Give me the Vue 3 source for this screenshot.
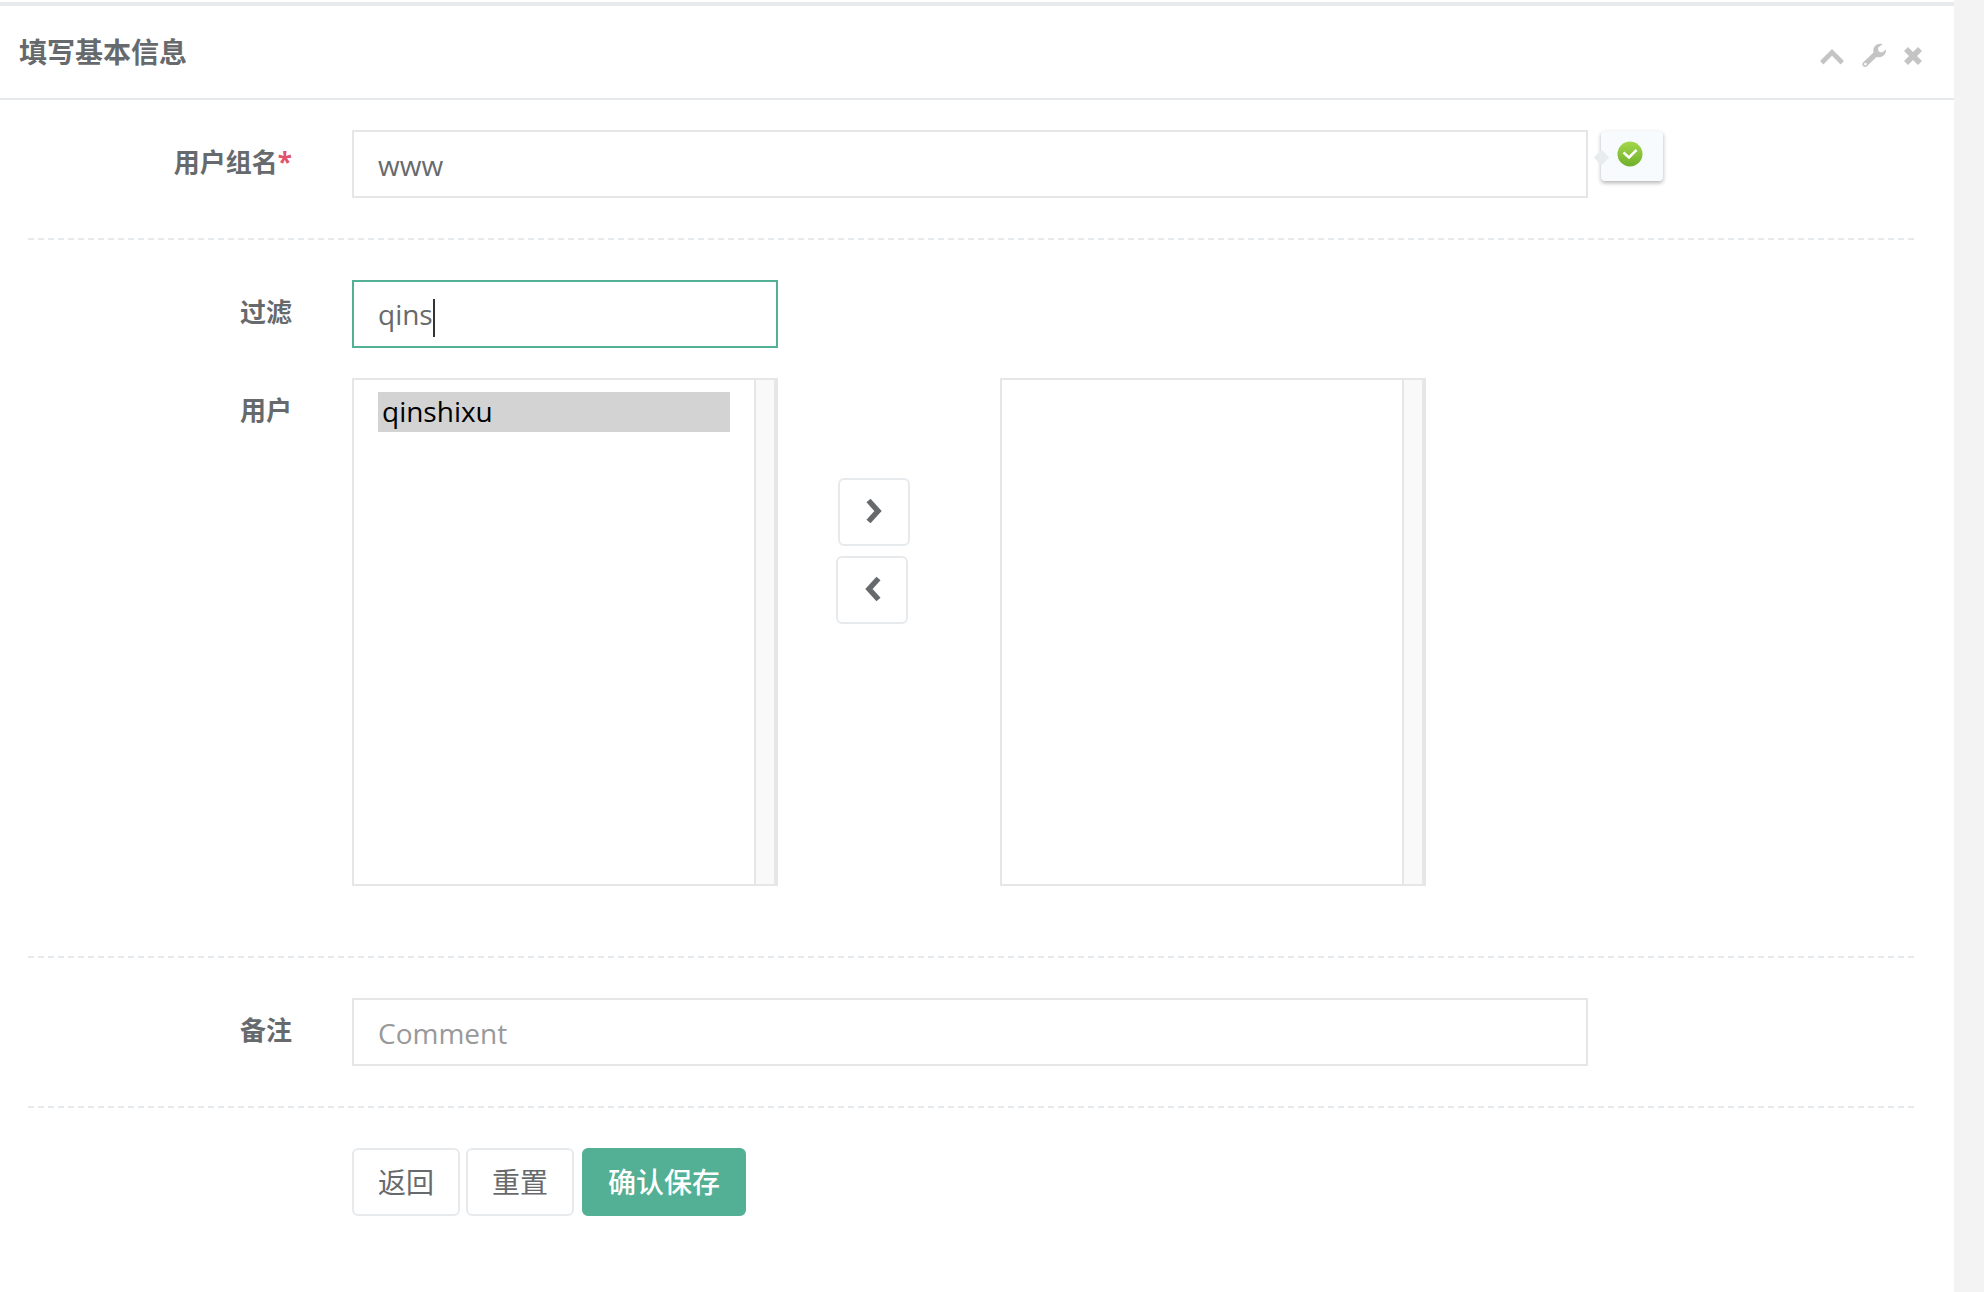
<script setup>
const availableUsers = ['qinshixu']
</script>

<template>
  <div class="page">
    <div class="panel">
      <div class="panel-title">
        <h5>填写基本信息</h5>
        <div class="tools">
          <svg class="tool-up" width="24" height="16" viewBox="0 0 24 16">
            <path d="M0 12 12 0l12 12-3.400 3.400L12 6.800 3.400 15.400z" fill="#c4c4c4" />
          </svg>
          <svg class="tool-wrench" width="24" height="24" viewBox="0 0 24 24">
            <path fill-rule="evenodd" d="M1 19.500 11.500 9.500C10.500 5 13.500 .5 19 .8l1.500.4-4.500 3.600.6 3.600 3.400 1.200L24 6.500c.4 5-3.800 8.800-9.500 7.500L5 23.300c-1.200 1-2.800.9-3.800-.1-1-1-1.100-2.600-.2-3.700zM3.400 19.800a1.300 1.300 0 1 0 .01 0z" fill="#c4c4c4" />
          </svg>
          <svg class="tool-close" width="20" height="20" viewBox="0 0 20 20">
            <path d="M1 5 5 1l5 5 5-5 4 4-5 5 5 5-4 4-5-5-5 5-4-4 5-5z" fill="#c4c4c4" />
          </svg>
        </div>
      </div>

      <form class="form" @submit.prevent>
        <div class="row">
          <label class="label">用户组名<span class="required">*</span></label>
          <div class="field">
            <input class="input" type="text" value="www" />
            <div class="valid-tip">
              <svg width="26" height="26" viewBox="0 0 26 26">
                <defs>
                  <linearGradient id="tip-green" x1="0" y1="0" x2="0" y2="1">
                    <stop offset="0" stop-color="#a4d64a" />
                    <stop offset="1" stop-color="#6fb02c" />
                  </linearGradient>
                </defs>
                <circle cx="13" cy="13" r="12.500" fill="url(#tip-green)" />
                <path d="M6.500 11.500 12 16.500 19.500 9" fill="none" stroke="#fff" stroke-width="2.500" />
              </svg>
            </div>
          </div>
        </div>

        <div class="dashed"></div>

        <div class="row">
          <label class="label">过滤</label>
          <div class="filter-input">qins<span class="caret"></span></div>
        </div>

        <div class="row row-users">
          <label class="label">用户</label>
          <div class="transfer">
            <div class="list">
              <div class="list-items">
                <div v-for="user in availableUsers" :key="user" class="list-item">{{ user }}</div>
              </div>
              <div class="list-scroll"></div>
            </div>
            <div class="arrows">
              <button class="arrow-btn" type="button">
                <svg width="18" height="26" viewBox="0 0 18 26">
                  <path d="M3.500 2.500 13 13 3.500 23.500" fill="none" stroke="#676a6c" stroke-width="5.500" />
                </svg>
              </button>
              <button class="arrow-btn arrow-back" type="button">
                <svg width="18" height="26" viewBox="0 0 18 26">
                  <path d="M14.500 2.500 5 13 14.500 23.500" fill="none" stroke="#676a6c" stroke-width="5.500" />
                </svg>
              </button>
            </div>
            <div class="list">
              <div class="list-items"></div>
              <div class="list-scroll"></div>
            </div>
          </div>
        </div>

        <div class="dashed dashed-users"></div>

        <div class="row">
          <label class="label">备注</label>
          <input class="input" type="text" placeholder="Comment" />
        </div>

        <div class="dashed"></div>

        <div class="row actions">
          <button class="btn" type="button">返回</button>
          <button class="btn" type="button">重置</button>
          <button class="btn btn-primary" type="submit">确认保存</button>
        </div>
      </form>
    </div>
  </div>
</template>

<style scoped>
.page {
  width: 1984px;
  height: 1292px;
  background: #f3f3f4;
  font-family: "Open Sans", "Noto Sans CJK SC", sans-serif;
  color: #676a6c;
  overflow: hidden;
}
.panel {
  width: 1954px;
  height: 1292px;
  background: #fff;
  padding-top: 2px;
  box-sizing: border-box;
}
.panel-title {
  height: 98px;
  box-sizing: border-box;
  border-top: 4px solid #e7eaec;
  border-bottom: 2px solid #e7eaec;
  display: flex;
  align-items: flex-start;
  justify-content: space-between;
  padding: 0 31px 0 19px;
}
.panel-title h5 {
  margin: 26px 0 0;
  font-size: 28px;
  line-height: 40px;
  font-weight: 700;
}
.tools {
  display: flex;
  align-items: flex-start;
}
.tool-up {
  margin-top: 43px;
}
.tool-wrench {
  margin: 37px 0 0 18px;
}
.tool-close {
  margin: 40px 0 0 17px;
}
.form {
  padding: 30px 40px 0 28px;
}
.row {
  display: flex;
  align-items: flex-start;
}
.row-users {
  margin-top: 30px;
}
.label {
  width: 324px;
  padding: 12px 60px 0 0;
  box-sizing: border-box;
  text-align: right;
  font-size: 26px;
  line-height: 40px;
  font-weight: 700;
  flex-shrink: 0;
}
.required {
  color: #e2536b;
}
.field {
  display: flex;
  align-items: flex-start;
}
.input,
.filter-input {
  height: 68px;
  box-sizing: border-box;
  border: 2px solid #e5e6e7;
  padding: 2px 24px 0;
  background: #fff;
  font-family: inherit;
  font-size: 28px;
  color: #676a6c;
  outline: none;
}
.input {
  width: 1236px;
  border-radius: 0;
}
.input::placeholder {
  color: #999;
  opacity: 1;
}
.filter-input {
  width: 426px;
  border-color: #53b094;
  line-height: 60px;
}
.caret {
  display: inline-block;
  width: 2px;
  height: 38px;
  background: #333;
  vertical-align: middle;
}
.valid-tip {
  position: relative;
  width: 62px;
  height: 50px;
  margin: 1px 0 0 13px;
  padding: 10px 0 0 16px;
  box-sizing: border-box;
  background: #f8fbfe;
  border-radius: 4px;
  box-shadow: 0 2px 4px rgba(0, 0, 0, 0.3);
}
.valid-tip::before {
  content: "";
  position: absolute;
  left: -5px;
  top: 21px;
  width: 11px;
  height: 11px;
  background: #e9ecef;
  transform: rotate(45deg);
}
.valid-tip svg {
  position: relative;
  display: block;
}
.dashed {
  border-top: 2px dashed #e7eaec;
  margin: 40px 0;
}
.dashed-users {
  margin-top: 70px;
}
.transfer {
  display: flex;
  align-items: flex-start;
}
.list {
  width: 426px;
  height: 508px;
  box-sizing: border-box;
  border: 2px solid #e5e6e7;
  display: flex;
}
.list-items {
  flex: 1;
  padding: 12px 24px;
  font-size: 28px;
  color: #000;
}
.list-item {
  height: 40px;
  line-height: 38px;
  padding-left: 4px;
  background: #d3d3d3;
}
.list-scroll {
  width: 18px;
  background: #f9f9f9;
  border-left: 2px solid #e5e6e7;
  border-right: 2px solid #e5e6e7;
}
.arrows {
  width: 222px;
  box-sizing: border-box;
  padding: 100px 0 0 60px;
  display: flex;
  flex-direction: column;
  align-items: flex-start;
}
.arrow-btn {
  width: 72px;
  height: 68px;
  background: #fff;
  border: 2px solid #e7eaec;
  border-radius: 6px;
  padding: 0 0 3px;
  display: flex;
  align-items: center;
  justify-content: center;
}
.arrow-back {
  margin: 10px 0 0 -2px;
  padding: 0 0 2px 2px;
}
.actions {
  padding-left: 324px;
  gap: 6px;
}
.btn {
  width: 108px;
  height: 68px;
  padding: 0 0 2px;
  box-sizing: border-box;
  background: #fff;
  border: 2px solid #e7eaec;
  border-radius: 6px;
  font-family: inherit;
  font-size: 28px;
  color: #676a6c;
}
.btn-primary {
  width: 164px;
  margin-left: 2px;
  background: #53b094;
  border-color: #53b094;
  color: #fff;
  font-weight: 500;
}
</style>
